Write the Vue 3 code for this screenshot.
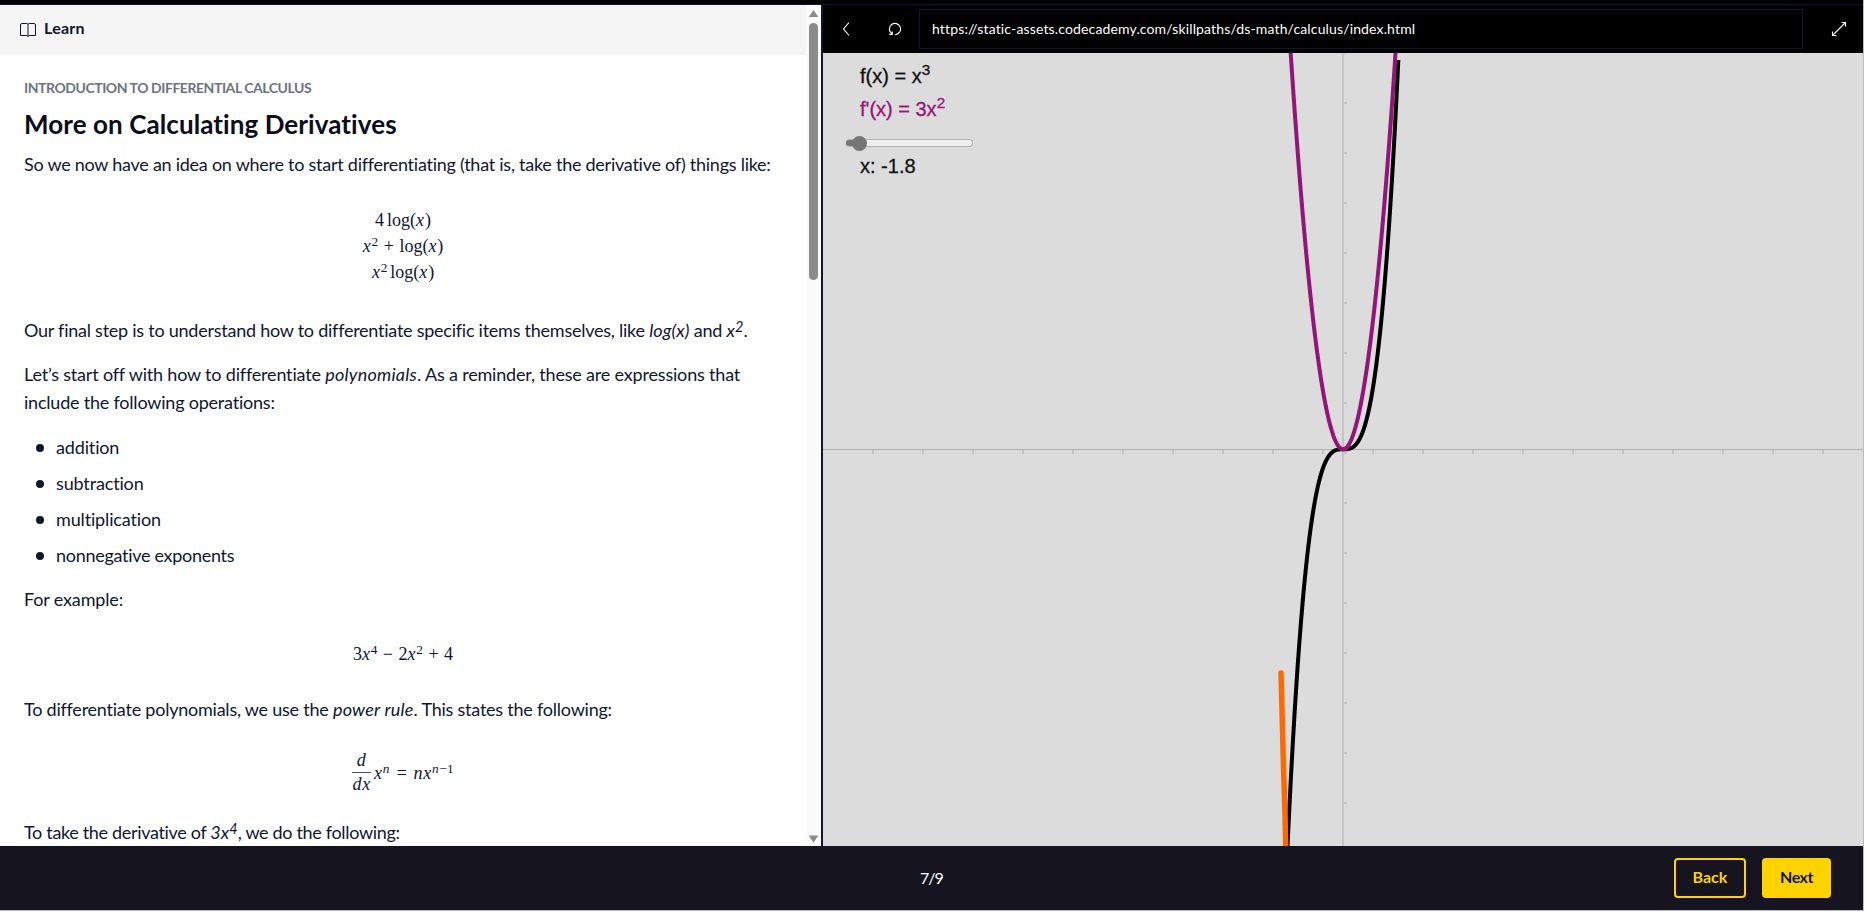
<script setup>
const operations = ['addition', 'subtraction', 'multiplication', 'nonnegative exponents']

// Graph geometry: origin and scale inside the 1040x793 canvas.
const ox = 520.1
const oy = 396.3
const unit = 20.8
function plot(fn, from, to) {
  const pts = []
  for (let i = 0; i <= 160; i++) {
    const x = from + ((to - from) * i) / 160
    pts.push(`${(ox + x * unit).toFixed(2)},${(oy - fn(x) * unit).toFixed(2)}`)
  }
  return pts.join(' ')
}
const cubic = plot((x) => x ** 3, -2.8, 2.655)
const parabola = plot((x) => 3 * x * x, -2.65, 2.65)
const xTicks = Array.from({ length: 20 }, (_, i) => (i + 1) * 50)
const yTicks = Array.from({ length: 16 }, (_, i) => i * 50)
</script>

<template>
  <div class="page">
    <div class="topline"></div>
    <main class="workspace">
      <section class="lesson">
        <div class="doc">
          <header class="learn">
            <svg class="book" width="18" height="16" viewBox="0 0 18 16"><path d="M9 2.2 7.8 1.5H3Q1.5 1.5 1.5 3v10.5h6.3L9 14.6l1.2-1.1h6.3V3Q16.5 1.5 15 1.5h-4.800L9 2.200v12.400" fill="none" stroke="#10162f" stroke-width="1" /></svg>
            <span class="learn-label">Learn</span>
          </header>
          <div class="body">
            <div class="eyebrow">INTRODUCTION TO DIFFERENTIAL CALCULUS</div>
            <h1>More on Calculating Derivatives</h1>
            <p class="p1">So we now have an idea on where to start differentiating (that is, take the derivative of) things like:</p>
            <div class="math first">
              <div>4<span class="thin"></span>log(<i>x</i>)</div>
              <div><i>x</i><sup>2</sup><b class="op">+</b>log(<i>x</i>)</div>
              <div><i>x</i><sup>2</sup><span class="thin"></span>log(<i>x</i>)</div>
            </div>
            <p class="gap p2">Our final step is to understand how to differentiate specific items themselves, like <em>log(x)</em> and <em>x<sup>2</sup></em>.</p>
            <p class="p3">Let’s start off with how to differentiate <em>polynomials</em>. As a reminder, these are expressions that</p>
            <p class="p4 gap">include the following operations:</p>
            <ul>
              <li v-for="op in operations" :key="op">{{ op }}</li>
            </ul>
            <p class="p5">For example:</p>
            <div class="math second">3<i>x</i><sup>4</sup><b class="op">−</b>2<i>x</i><sup>2</sup><b class="op">+</b>4</div>
            <p class="p6">To differentiate polynomials, we use the <em>power rule</em>. This states the following:</p>
            <div class="math third">
              <span class="frac"><i>d</i><i class="den">dx</i></span>
              <span><i>x</i><sup><i>n</i></sup><b class="op">=</b><i>nx</i><sup><i>n</i>−1</sup></span>
            </div>
            <p class="p7">To take the derivative of <em>3x<sup>4</sup></em>, we do the following:</p>
          </div>
        </div>
        <div class="scrollbar">
          <svg width="9" height="8" viewBox="0 0 9 8"><path d="M4.5 0 9 6.5Q9 7 8.5 7H.5Q0 7 0 6.5Z" fill="#8b8b8b" /></svg>
          <div class="thumb"></div>
          <svg width="9" height="8" viewBox="0 0 9 8"><path d="M4.5 7.5 9 1Q9 .5 8.5 .5H.5Q0 .5 0 1Z" fill="#8b8b8b" /></svg>
        </div>
      </section>

      <section class="browser">
        <div class="bar">
          <svg class="back" width="8" height="16" viewBox="0 0 8 16"><path d="M7 1.500 1.500 8 7 14.500" fill="none" stroke="#fff" stroke-width="1.1" /></svg>
          <svg class="reload" width="14" height="14" viewBox="0 0 14 14"><path d="M1.300 12.400H4.300V9.600M3.800 11.600A5.600 5.600 0 1 1 7.200 12.600" fill="none" stroke="#fff" stroke-width="1.1" /></svg>
          <div class="url">https://static-assets.codecademy.com/skillpaths/ds-math/calculus/index.html</div>
          <svg class="expand" width="16" height="16" viewBox="0 0 16 16"><path d="M1.500 14.500 14.500 1.500M10.500 1.500h4v4M1.500 10.500v4h4" fill="none" stroke="#fff" stroke-width="1.1" /></svg>
        </div>
        <div class="canvas">
          <svg class="plot" width="1040" height="793" viewBox="0 0 1040 793">
            <g stroke="#c4c4c4" stroke-width="2">
              <path d="M520 0V793" />
              <path v-for="t in xTicks" :key="'x' + t" :d="`M${t} 396V401`" />
              <path v-for="t in yTicks" :key="'y' + t" :d="`M520 ${t}H524`" />
            </g>
            <path d="M0 396.500H1040" stroke="#b0b0b0" />
            <polyline :points="cubic" fill="none" stroke="#000" stroke-width="4" />
            <polyline :points="parabola" fill="none" stroke="#951479" stroke-width="4" />
            <path d="M458 620 458.800 650 460.300 707 462 760 462.700 796" fill="none" stroke="#ff6a00" stroke-width="5.500" stroke-linecap="round" />
          </svg>
          <div class="controls">
            <div class="fx">f(x) = x<sup>3</sup></div>
            <div class="dfx">f'(x) = 3x<sup>2</sup></div>
            <div class="slider"><div class="knob"></div></div>
            <div class="value">x: -1.8</div>
          </div>
        </div>
      </section>
    </main>
    <footer>
      <span class="count">7/9</span>
      <button class="btn outline">Back</button>
      <button class="btn solid">Next</button>
    </footer>
  </div>
</template>

<style>
body { background: #fff; overflow: hidden; }
</style>
<style scoped>
.page { width: 1864px; height: 911px; box-sizing: border-box; border-right: 1px solid #b9bcc0; border-bottom: 1px solid #b5bcc2; font-family: Lato, sans-serif; color: #10162f; display: flex; flex-direction: column; }
.topline { height: 5px; box-sizing: border-box; background: #000; border-bottom: 1px solid #0c1230; }
.workspace { height: 841px; display: flex; }
.lesson { width: 823px; box-sizing: border-box; border-right: 2px solid #10162f; display: flex; overflow: hidden; background: #fff; }
.doc { width: 806px; overflow: hidden; }
.learn { height: 50px; background: #f5f5f5; display: flex; align-items: center; padding-left: 19px; gap: 7px; font-size: 16px; font-weight: 700; box-sizing: border-box; }
.learn-label { padding-bottom: 5px; letter-spacing: .25px; }
.body { white-space: nowrap; }
.eyebrow, h1, p, ul { padding-left: 24px; margin: 0; }
.eyebrow { padding-top: 23px; line-height: 20px; font-size: 14px; font-weight: 700; color: #6f7280; letter-spacing: -.45px; }
h1 { font-size: 26px; line-height: 36px; padding-top: 8px; padding-bottom: 8px; color: #0a0d1c; letter-spacing: .08px; }
p { font-size: 18px; line-height: 28px; }
em { letter-spacing: .1px; }
.p1 { letter-spacing: -.255px; }
.p2 { letter-spacing: -.245px; }
.p3 { letter-spacing: -.185px; }
.p3 em { letter-spacing: .25px; }
.p4 { letter-spacing: -.21px; }
.p5 { letter-spacing: -.15px; }
.p6 { letter-spacing: -.23px; }
.p6 em { letter-spacing: .2px; }
.p7 { letter-spacing: -.33px; }
sup { line-height: 0; font-size: 80%; vertical-align: .36em; }
.math { font-family: "Liberation Serif", serif; font-size: 18px; line-height: 26px; text-align: center; }
.math i { letter-spacing: .8px; }
.math sup { font-size: 74%; vertical-align: .48em; }
.thin { display: inline-block; width: 3px; }
.op { font-weight: 400; margin: 0 5.5px; }
.first { padding: 29px 0 31px; }
.second { padding: 28px 0; }
.third { height: 95px; box-sizing: border-box; padding-top: 4px; display: flex; justify-content: center; align-items: center; gap: 3px; }
.third .op { margin: 0 6.5px; }
.frac { display: flex; flex-direction: column; line-height: 23px; }
.den { border-top: 1px solid #4a4e63; }
.gap { margin-bottom: 16px; }
ul { list-style: none; margin: 17px 0 8px; }
li { font-size: 18px; line-height: 28px; height: 36px; padding-left: 12px; display: flex; letter-spacing: -.15px; }
li:last-child { letter-spacing: -.29px; }
li::before { content: ""; width: 8px; height: 8px; border-radius: 50%; background: #10162f; margin: 11px 12px 0 0; }
.scrollbar { width: 15px; background: #fbfbfb; display: flex; flex-direction: column; align-items: center; padding: 5px 0 3px; box-sizing: border-box; }
.thumb { width: 9px; height: 257px; background: #8b8b8b; border-radius: 5px; margin-top: 5px; margin-bottom: auto; }
.browser { width: 1040px; }
.bar { height: 48px; background: #000; display: flex; align-items: center; }
.url { color: #fff; font-size: 14px; letter-spacing: .145px; width: 884px; height: 40px; box-sizing: border-box; border: 1px solid #10162f; padding: 0 0 2px 12px; display: flex; align-items: center; }
.back { margin-left: 19px; }
.reload { margin: 0 17px 0 38px; }
.expand { margin-left: 28px; }
.canvas { height: 793px; background: #dcdcdc; position: relative; overflow: hidden; }
.plot { display: block; }
.controls { position: absolute; left: 37px; top: 11px; font: 20px/24px "Liberation Sans", sans-serif; color: #111; -webkit-text-stroke: .3px currentColor; }
.controls sup { vertical-align: .5em; font-size: 76%; }
.fx { height: 33px; }
.dfx { height: 42px; color: #951479; }
.slider { width: 127px; height: 8px; box-sizing: border-box; background: linear-gradient(90deg, #767676 14px, #efefef 14px); border: 1px solid #b2b2b2; border-left-color: #767676; border-radius: 5px; margin: 0 0 7px -14px; display: flex; align-items: center; }
.knob { width: 15px; height: 15px; border-radius: 50%; background: #767676; margin-left: 5px; flex: none; }
footer { height: 64px; background: #15141f; display: flex; align-items: center; color: #fff; }
.count { margin-left: 920px; font-size: 16px; letter-spacing: -1px; margin-right: auto; padding-bottom: 2px; }
.btn { width: 72px; height: 40px; box-sizing: border-box; border: 2px solid #ffd300; border-radius: 4px; background: transparent; color: #ffd300; font: 700 16px Lato, sans-serif; padding: 0 0 3px; margin-right: 16px; }
.solid { background: #ffd300; color: #15141f; width: 69px; margin-right: 32px; letter-spacing: -.5px; }
</style>
